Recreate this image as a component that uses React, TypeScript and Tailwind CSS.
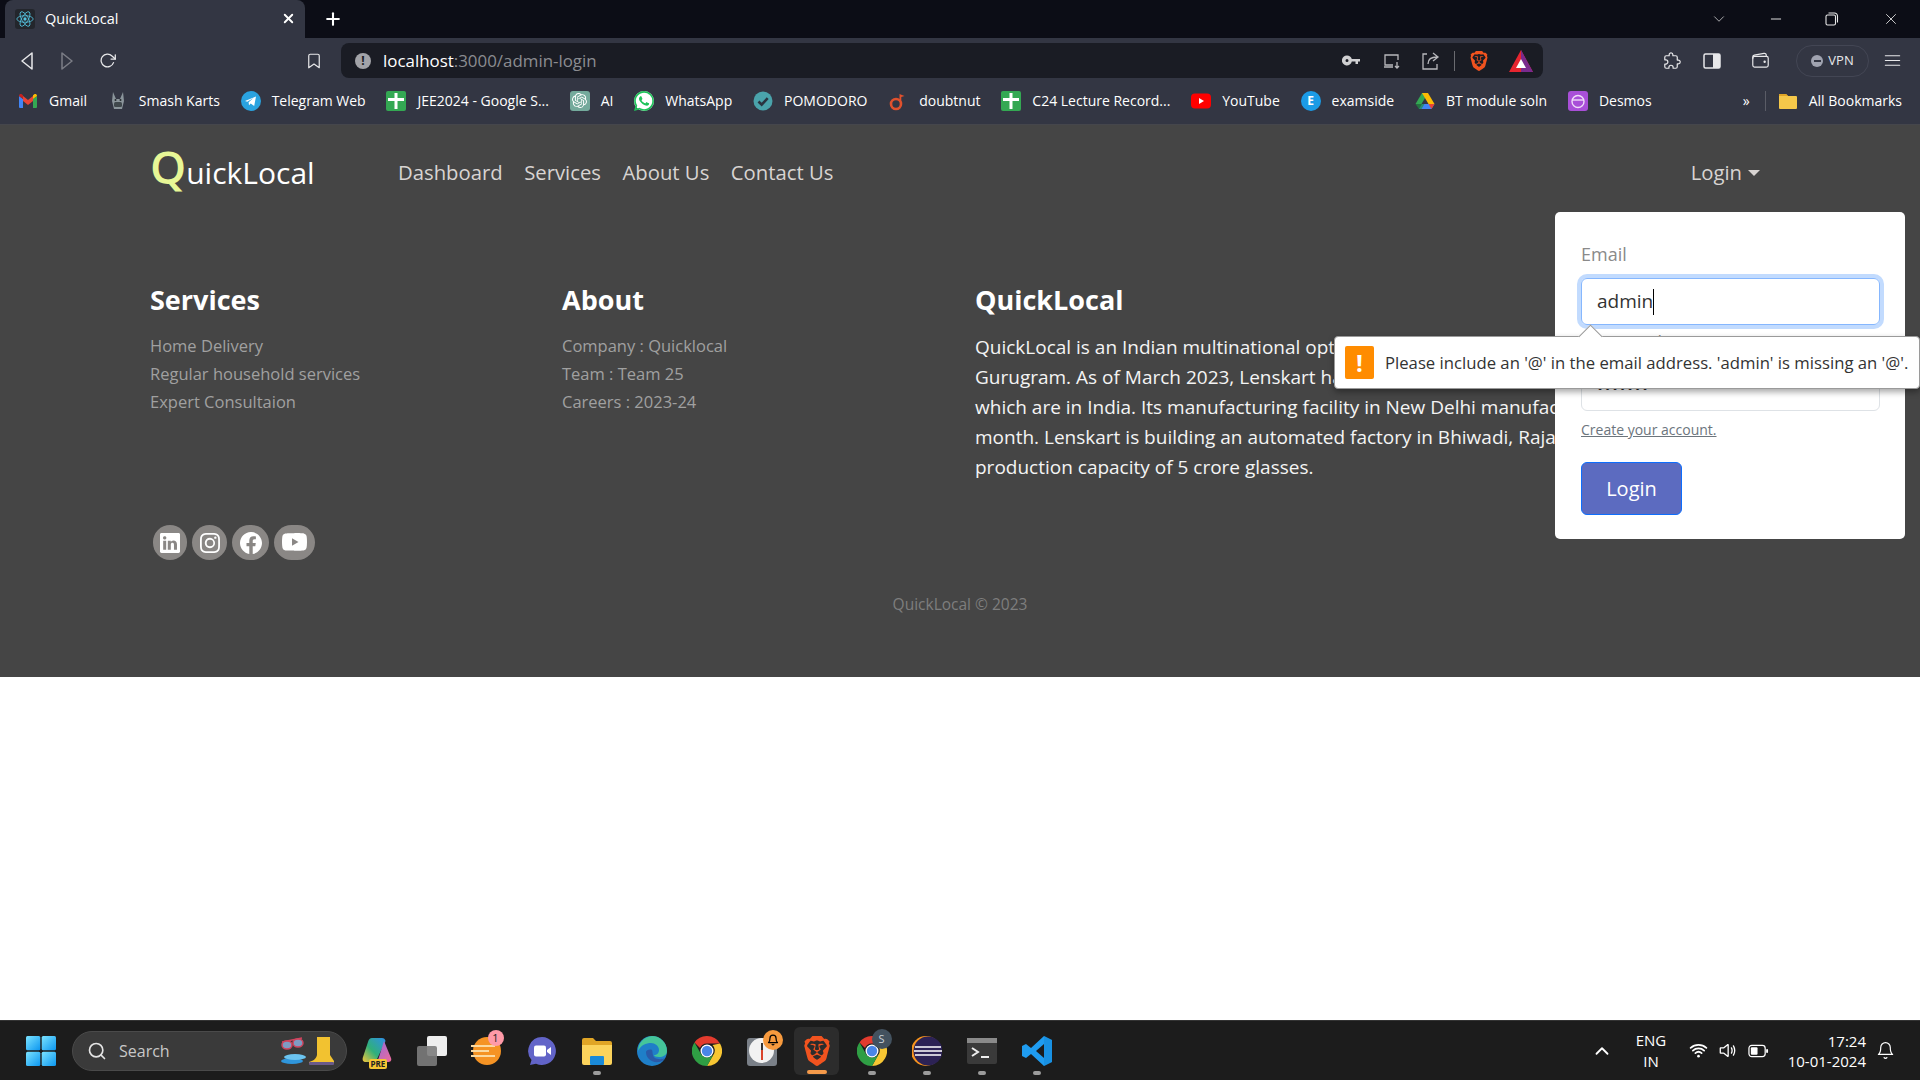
import React from 'react'
import { BsLinkedin, BsInstagram, BsFacebook, BsYoutube } from 'react-icons/bs'
import { SiOpenai, SiWhatsapp, SiBrave } from 'react-icons/si'
import { FiSearch, FiBell, FiChevronUp, FiChevronDown, FiX, FiMinus, FiPlus, FiBookmark, FiRotateCw, FiMenu } from 'react-icons/fi'
import { IoExtensionPuzzleOutline, IoWalletOutline, IoVolumeMediumOutline, IoWifi } from 'react-icons/io5'

const Sheet = () => (
  <svg viewBox="0 0 20 20" className="w-5 h-5">
    <rect width="20" height="20" rx="2" fill="#34a853" />
    <path d="M8.5 2h3v5H18v3h-6.500v8h-3v-8H2V7h6.500z" fill="#fff" />
  </svg>
)

const bookmarks: { label: string; icon: React.ReactNode }[] = [
  {
    label: 'Gmail',
    icon: (
      <svg viewBox="0 0 20 20" className="w-5 h-5">
        <path d="M1 5l4 3v9H2a1 1 0 0 1-1-1z" fill="#4285f4" />
        <path d="M19 5l-4 3v9h3a1 1 0 0 0 1-1z" fill="#34a853" />
        <path d="M5 5v5l5 4 5-4V5l-5 4z" fill="#ea4335" />
        <path d="M1 5c0-2 2-2.500 3-1.500L5 4.300V8L1 5z" fill="#c5221f" />
        <path d="M19 5c0-2-2-2.500-3-1.500l-1 .8V8z" fill="#fbbc04" />
      </svg>
    ),
  },
  {
    label: 'Smash Karts',
    icon: (
      <svg viewBox="0 0 20 20" className="w-5 h-5">
        <path d="M5 1l3 7h4l3-7 1 9-2 8H6l-2-8z" fill="#8b959b" />
        <rect x="6" y="11" width="8" height="5" rx="1.500" fill="#40484c" />
        <circle cx="7.500" cy="9" r="1" fill="#23292c" />
        <circle cx="12.500" cy="9" r="1" fill="#23292c" />
      </svg>
    ),
  },
  {
    label: 'Telegram Web',
    icon: (
      <svg viewBox="0 0 20 20" className="w-5 h-5">
        <circle cx="10" cy="10" r="10" fill="#2aa3e0" />
        <path d="M4 10l11-4.500-1.800 9.500-3.500-2.500-1.700 1.700-.4-3 4.900-4.300-6.200 3.800z" fill="#fff" />
      </svg>
    ),
  },
  { label: 'JEE2024 - Google S...', icon: <Sheet /> },
  {
    label: 'AI',
    icon: (
      <span className="w-5 h-5 rounded-[3px] bg-[#74aa9c] flex items-center justify-center text-white text-[15px]">
        <SiOpenai />
      </span>
    ),
  },
  {
    label: 'WhatsApp',
    icon: (
      <span className="w-5 h-5 rounded-full bg-white flex items-center justify-center text-[#1fc35a] text-[20px]">
        <SiWhatsapp />
      </span>
    ),
  },
  {
    label: 'POMODORO',
    icon: (
      <svg viewBox="0 0 20 20" className="w-5 h-5">
        <circle cx="10" cy="10" r="9.500" fill="#4aa3ab" />
        <path d="M5.500 10.500l3.200 3.200 6-6.500" fill="none" stroke="#2a3440" strokeWidth="2.600" />
      </svg>
    ),
  },
  {
    label: 'doubtnut',
    icon: (
      <svg viewBox="0 0 20 20" className="w-5 h-5">
        <circle cx="8" cy="13" r="5" fill="none" stroke="#e0512d" strokeWidth="2.600" />
        <path d="M11.500 11V3l5 2-3.200 1v6z" fill="#e0512d" />
      </svg>
    ),
  },
  { label: 'C24 Lecture Record...', icon: <Sheet /> },
  {
    label: 'YouTube',
    icon: (
      <svg viewBox="0 0 20 20" className="w-5 h-5">
        <rect y="2.500" width="20" height="15" rx="4" fill="#f00" />
        <path d="M8 7l5 3-5 3z" fill="#fff" />
      </svg>
    ),
  },
  {
    label: 'examside',
    icon: (
      <span className="w-5 h-5 rounded-full bg-[#1b9be6] flex items-center justify-center text-white text-[12px] font-bold">
        E
      </span>
    ),
  },
  {
    label: 'BT module soln',
    icon: (
      <svg viewBox="0 0 20 20" className="w-5 h-5">
        <path d="M7 2h6l-6.500 11H0.500z" fill="#34a853" />
        <path d="M7 2h6l6.500 11h-6z" fill="#fbbc04" />
        <path d="M4 18l3-5h12.500l-3 5z" fill="#4285f4" />
        <path d="M0.500 13h6l3 0-3 5H4z" fill="#1e8e3e" opacity="0.700" />
        <path d="M13.500 13h6l-3 5z" fill="#ea4335" />
      </svg>
    ),
  },
  {
    label: 'Desmos',
    icon: (
      <svg viewBox="0 0 20 20" className="w-5 h-5">
        <rect width="20" height="20" rx="3" fill="#a94fd8" />
        <circle cx="10" cy="10.500" r="6" fill="none" stroke="#f0dcf8" strokeWidth="1.400" />
        <path d="M4 9h12" stroke="#f0dcf8" strokeWidth="1.400" />
      </svg>
    ),
  },
]

const Caret = ({ back = false }: { back?: boolean }) => (
  <svg viewBox="0 0 14 20" className={back ? 'w-[14px] h-5 rotate-180' : 'w-[14px] h-5 opacity-40'}>
    <path d="M2 2l10 8-10 8z" fill="none" stroke="#e8e8ea" strokeWidth="1.500" strokeLinejoin="round" />
  </svg>
)

function TabStrip() {
  return (
    <div className="h-[38px] bg-[#0c0d16] flex items-end pl-[5px] text-white shrink-0">
      <div className="w-[300px] h-[38px] bg-[#333643] rounded-t-[8px] flex items-center pl-[10px] pr-[9px] pb-[1px]">
        <span className="w-5 h-5 bg-[#23262c] rounded-[3px] flex items-center justify-center">
          <svg viewBox="-11 -11 22 22" className="w-[18px] h-[18px]" fill="none" stroke="#53c1de" strokeWidth="1">
            <circle r="2" fill="#53c1de" stroke="none" />
            <ellipse rx="10" ry="4" />
            <ellipse rx="10" ry="4" transform="rotate(60)" />
            <ellipse rx="10" ry="4" transform="rotate(120)" />
          </svg>
        </span>
        <span className="ml-[10px] text-[14.500px] flex-1">QuickLocal</span>
        <FiX className="text-[15px]" strokeWidth={3} />
      </div>
      <div className="h-[38px] flex items-center ml-[18px]">
        <FiPlus className="text-[20px]" strokeWidth={2.500} />
      </div>
      <div className="flex-1" />
      <div className="h-[38px] flex items-center text-[#dcdcdc]">
        <FiChevronDown className="text-[18px] w-[18px] font-light" strokeWidth={1} />
        <span className="w-[40px]" />
        <FiMinus className="text-[16px]" strokeWidth={1.500} />
        <span className="w-[41px]" />
        <svg viewBox="0 0 14 14" className="w-[14px] h-[14px]" fill="none" stroke="#e8e8e8" strokeWidth="1.100">
          <rect x="1" y="3" width="9.500" height="10" rx="1.500" />
          <path d="M3.500 1h6a3 3 0 0 1 3 3v6.500" />
        </svg>
        <span className="w-[43px]" />
        <FiX className="text-[18px]" strokeWidth={1.200} />
        <span className="w-[20px]" />
      </div>
    </div>
  )
}

function Toolbar() {
  return (
    <div className="h-[40px] bg-[#333643] flex items-end pl-[20px] pr-[18px] text-[#e8e8ea] shrink-0">
      <div className="h-[35px] flex items-center w-[321px] shrink-0">
        <Caret back />
        <span className="w-[26px]" />
        <Caret />
        <span className="w-[25px]" />
        <FiRotateCw className="text-[17px]" strokeWidth={1.800} />
        <span className="w-[189px]" />
        <FiBookmark className="text-[18px]" strokeWidth={1.600} />
      </div>
      <div className="w-[1202px] h-[35px] bg-[#1a1c24] rounded-t-[8px] rounded-b-[8px] flex items-center pl-[14px] pr-[10px]">
        <span className="w-4 h-4 rounded-full bg-[#a2a3a8] text-[#1a1c24] flex items-center justify-center text-[12px] font-bold">!</span>
        <span className="ml-[12px] text-[16.900px] flex-1">
          <span className="text-white">localhost</span>
          <span className="text-[#8b8c91]">:3000/admin-login</span>
        </span>
        <svg viewBox="0 0 18 12" className="w-[18px] h-[12px]">
          <path d="M5 0.500a5 5 0 0 1 4.800 3.500H18v2.500h-2v2.500h-2.500V6.500H9.800A5 5 0 1 1 5 0.500zm0 3.500a1.500 1.500 0 1 0 0 3 1.500 1.500 0 0 0 0-3z" fill="#d0d0d2" fillRule="evenodd" />
        </svg>
        <span className="w-[23px]" />
        <svg viewBox="0 0 18 18" className="w-[18px] h-[18px]" fill="none" stroke="#b8b8bc" strokeWidth="1.300">
          <path d="M15 8V3H2v10h8M1 15h9M14 10v6m-2-2l2 2 2-2" />
        </svg>
        <span className="w-[21px]" />
        <svg viewBox="0 0 18 18" className="w-[18px] h-[18px]" fill="none" stroke="#b8b8bc" strokeWidth="1.300">
          <path d="M5 2H1v15h14v-5M6 12c0-5 3-7 9-7M11 1l5 4-5 4" />
        </svg>
        <span className="w-[14px]" />
        <span className="w-px h-5 bg-[#6a6b70]" />
        <span className="w-[14px]" />
        <SiBrave className="text-[20px] text-[#f1531f]" />
        <span className="w-[20px]" />
        <svg viewBox="0 0 24 22" className="w-[24px] h-[22px]">
          <path d="M12 0l12 22H0z" fill="#e6252f" />
          <path d="M12 0l12 22H12z" fill="#7a2a8e" />
          <path d="M12 9l5 9H7z" fill="#fff" />
        </svg>
      </div>
      <div className="flex-1 h-[35px] flex items-center justify-end">
        <IoExtensionPuzzleOutline className="text-[19px]" />
        <span className="w-[21px]" />
        <svg viewBox="0 0 18 16" className="w-[18px] h-[16px]">
          <rect x="1" y="1" width="16" height="14" rx="1.500" fill="none" stroke="#e8e8ea" strokeWidth="1.500" />
          <rect x="10" y="1" width="7" height="14" fill="#e8e8ea" />
        </svg>
        <span className="w-[30px]" />
        <IoWalletOutline className="text-[19px]" />
        <span className="w-[26px]" />
        <span className="w-[73px] h-[32px] border border-[#434654] rounded-full flex items-center justify-center gap-[5px] text-[13px]">
          <span className="w-3 h-3 rounded-full bg-[#a0a3b0] flex items-center justify-center">
            <span className="w-[7px] h-[2px] bg-[#333643]" />
          </span>
          VPN
        </span>
        <span className="w-[14px]" />
        <FiMenu className="text-[19px]" strokeWidth={1.500} />
      </div>
    </div>
  )
}

function BookmarksBar() {
  return (
    <div className="h-[47px] bg-[#333643] border-b border-[#45464c] flex items-center pl-[18px] pr-[18px] pb-[1px] text-[14px] text-white shrink-0">
      <div className="flex items-center gap-[20.800px] flex-1">
        {bookmarks.map((b) => (
          <div key={b.label} className="flex items-center gap-[11px] whitespace-nowrap">
            <span className="w-5 h-5 flex items-center justify-center">{b.icon}</span>
            <span>{b.label}</span>
          </div>
        ))}
      </div>
      <span className="mr-[15px] text-[14px]">»</span>
      <span className="w-px h-5 bg-[#5a5c66] mr-[12px]" />
      <svg viewBox="0 0 20 20" className="w-5 h-5 mr-[11px]">
        <path d="M1 4a1 1 0 0 1 1-1h6l2 2h8a1 1 0 0 1 1 1v11a1 1 0 0 1-1 1H2a1 1 0 0 1-1-1z" fill="#f5c84a" />
        <path d="M1 4a1 1 0 0 1 1-1h6l2 2H1z" fill="#e0a526" />
      </svg>
      <span className="whitespace-nowrap">All Bookmarks</span>
    </div>
  )
}

function LoginMenu() {
  return (
    <div className="absolute left-[1555px] top-[87px] w-[350px] h-[327px] bg-white rounded-[5px] pt-[25px] px-[26px] z-10">
      <p className="text-[18px] leading-[34px] text-[#8a8a8a]">Email</p>
      <div className="mt-[7px] h-[47px] w-[299px] rounded-[6px] border border-[#86b7fe] ring-4 ring-[#c2dbfe] flex items-center pl-[15px] text-[19px] text-[#333]">
        admin<span className="w-px h-[26px] bg-black" />
      </div>
      <p className="mt-[3px] text-[18px] leading-[28px] text-[#8a8a8a]">Password</p>
      <div className="mt-[8px] h-[47px] w-[299px] rounded-[6px] border border-[#dee2e6] pl-[15px] flex items-center text-[16px] text-[#222] tracking-[1.500px]">
        •••••••
      </div>
      <a className="block mt-[7px] text-[14px] leading-[24px] text-[#6c757d] underline">Create your account.</a>
      <button className="mt-[20px] w-[101px] h-[53px] rounded-[6px] bg-[#5c6bc0] border border-[#0d6efd] text-white text-[20px]">
        Login
      </button>
    </div>
  )
}

function ValidationBubble() {
  return (
    <div className="absolute left-[1334px] top-[211px] w-[586px] h-[53px] bg-white border border-[#9a9a9a] rounded-[4px] shadow-[0_3px_6px_rgba(0,0,0,0.35)] flex items-center pl-[10px] z-20 whitespace-nowrap">
      <span className="absolute left-[247px] -top-[9px] w-[17px] h-[17px] bg-white border-l border-t border-[#9a9a9a] rotate-45" />
      <span className="w-[29px] h-[33px] rounded-[2px] bg-[#ff8c00] text-white flex items-center justify-center text-[24px] font-bold shrink-0">!</span>
      <span className="ml-[11px] text-[16.700px] text-[#333]">Please include an '@' in the email address. 'admin' is missing an '@'.</span>
    </div>
  )
}

function Page() {
  const social = [
    { icon: <BsLinkedin className="text-[20px]" />, cls: 'w-[34px]' },
    { icon: <BsInstagram className="text-[20px]" />, cls: 'w-[35px]' },
    { icon: <BsFacebook className="text-[22px]" />, cls: 'w-[37px]' },
    { icon: <BsYoutube className="text-[25px]" />, cls: 'w-[41px]' },
  ]
  return (
    <div className="relative h-[552px] bg-[#454545] shrink-0 overflow-hidden">
      <nav className="h-[95px] pl-[150px] pr-[160px] flex items-center">
        <div className="w-[248px] mb-[14px] text-white text-[30px] leading-none font-medium whitespace-nowrap">
          <span className="text-[#e8f796] text-[46px] leading-none font-semibold">Q</span>uickLocal
        </div>
        <div className="flex items-center gap-[21.500px] text-[20.300px] text-[#d8d4d2] flex-1">
          <span>Dashboard</span>
          <span>Services</span>
          <span>About Us</span>
          <span>Contact Us</span>
        </div>
        <div className="flex items-center gap-[6px] text-[20.300px] text-[#d8d4d2]">
          Login
          <span className="w-0 h-0 border-x-[6px] border-x-transparent border-t-[6px] border-t-[#d8d4d2]" />
        </div>
      </nav>
      <div className="pl-[150px] pt-[61px] grid grid-cols-[412px_413px_1fr]">
        <div>
          <h3 className="text-[27px] leading-[38px] font-bold text-white">Services</h3>
          <ul className="mt-[13px] text-[16.500px] leading-[28px] text-[#a0a0a0]">
            <li>Home Delivery</li>
            <li>Regular household services</li>
            <li>Expert Consultaion</li>
          </ul>
        </div>
        <div>
          <h3 className="text-[27px] leading-[38px] font-bold text-white">About</h3>
          <ul className="mt-[13px] text-[16.500px] leading-[28px] text-[#a0a0a0]">
            <li>Company : Quicklocal</li>
            <li>Team : Team 25</li>
            <li>Careers : 2023-24</li>
          </ul>
        </div>
        <div>
          <h3 className="text-[27px] leading-[38px] font-bold text-white">QuickLocal</h3>
          <div className="mt-[13px] text-[19px] leading-[30px] text-[#f4f4f4] whitespace-nowrap">
            <p>QuickLocal is an Indian multinational optical prescription eyewear retail</p>
            <p>Gurugram. As of March 2023, Lenskart has 2,000 stores, of</p>
            <p>which are in India. Its manufacturing facility in New Delhi manufactures 3 lakh glasses per</p>
            <p>month. Lenskart is building an automated factory in Bhiwadi, Rajasthan with a</p>
            <p>production capacity of 5 crore glasses.</p>
          </div>
        </div>
      </div>
      <div className="pl-[153px] mt-[43px] flex gap-[5px]">
        {social.map((s, i) => (
          <span key={i} className={`${s.cls} h-[35px] rounded-full bg-[#8a8785] text-white flex items-center justify-center`}>
            {s.icon}
          </span>
        ))}
      </div>
      <p className="mt-[34px] text-center text-[15.500px] leading-[20px] text-[#7e7e7e]">QuickLocal © 2023</p>
      <LoginMenu />
      <ValidationBubble />
    </div>
  )
}

function TaskIcon({ children, dot, active }: { children: React.ReactNode; dot?: boolean; active?: boolean }) {
  return (
    <div className={active ? 'relative w-[45px] h-[48px] mx-[5px] rounded-[6px] bg-[#2c2c2c] flex items-center justify-center' : 'relative w-[55px] h-[48px] flex items-center justify-center'}>
      {children}
      {dot && <span className="absolute bottom-0 w-[8px] h-[4px] rounded-full bg-[#9b9b9b]" />}
      {active && <span className="absolute bottom-[1px] w-[20px] h-[4px] rounded-full bg-[#f59a4a]" />}
    </div>
  )
}

const ChromeLogo = () => (
  <svg viewBox="0 0 30 30" className="w-[30px] h-[30px]">
    <path d="M15 0a15 15 0 0 1 13 7.500H15a7.500 7.500 0 0 0-7 4.500L2.500 6.500A15 15 0 0 1 15 0z" fill="#e33b2e" />
    <path d="M28 7.500A15 15 0 0 1 15 30l6.500-11.500A7.500 7.500 0 0 0 20.500 9z" fill="#f7c633" />
    <path d="M15 30A15 15 0 0 1 2.500 6.500L9 18a7.500 7.500 0 0 0 12.500.500z" fill="#2f9e44" />
    <circle cx="15" cy="15" r="6.500" fill="#fff" />
    <circle cx="15" cy="15" r="5.200" fill="#4a86e8" />
  </svg>
)

function Taskbar() {
  return (
    <div className="h-[60px] bg-[#1c1c1c] border-t border-[#333] flex items-center pl-[26px] text-white flex-1">
      <svg viewBox="0 0 30 30" className="w-[30px] h-[30px] shrink-0">
        <defs>
          <linearGradient id="win" x1="0" y1="0" x2="1" y2="1">
            <stop offset="0" stopColor="#7be3ff" />
            <stop offset="1" stopColor="#0b96f0" />
          </linearGradient>
        </defs>
        <rect width="14.300" height="14.300" rx="1.500" fill="url(#win)" />
        <rect x="15.700" width="14.300" height="14.300" rx="1.500" fill="url(#win)" />
        <rect y="15.700" width="14.300" height="14.300" rx="1.500" fill="url(#win)" />
        <rect x="15.700" y="15.700" width="14.300" height="14.300" rx="1.500" fill="url(#win)" />
      </svg>
      <div className="ml-[16px] w-[275px] h-[40px] rounded-full bg-[#3a3a3a] border border-[#4a4a4a] flex items-center pl-[14px] pr-[10px] shrink-0">
        <FiSearch className="text-[20px] text-[#e4e4e4]" />
        <span className="ml-[12px] text-[16px] text-[#c8c8c8] flex-1">Search</span>
        <svg viewBox="0 0 56 32" className="w-[56px] h-[32px]">
          <path d="M2 7l20-4" stroke="#d0455f" strokeWidth="1.500" />
          <ellipse cx="7" cy="10" rx="5" ry="4" fill="#7f9cc4" stroke="#d0455f" strokeWidth="1.500" />
          <ellipse cx="18" cy="8" rx="5" ry="4" fill="#7f9cc4" stroke="#d0455f" strokeWidth="1.500" />
          <ellipse cx="12" cy="26" rx="11" ry="3" fill="#2f96dc" />
          <ellipse cx="15" cy="22" rx="11" ry="3" fill="#6cc4f0" />
          <path d="M37 2h13v18l4 6v3H29v-2c4-1 7-3 8-7z" fill="#f2c230" />
          <rect x="29" y="27" width="25" height="3" rx="1" fill="#6a5a8a" />
        </svg>
      </div>
      <div className="flex items-center ml-[2px] shrink-0">
        <TaskIcon>
          <div className="relative">
            <svg viewBox="0 0 30 28" className="w-[30px] h-[28px]">
              <defs>
                <linearGradient id="copl" x1="0" y1="1" x2="1" y2="0">
                  <stop offset="0" stopColor="#f5c53a" />
                  <stop offset="0.450" stopColor="#30b07a" />
                  <stop offset="1" stopColor="#2f8fe8" />
                </linearGradient>
                <linearGradient id="copr" x1="0" y1="0" x2="1" y2="1">
                  <stop offset="0" stopColor="#8a6be0" />
                  <stop offset="1" stopColor="#f06a9a" />
                </linearGradient>
              </defs>
              <path d="M10 1h10c2 0 3 1 3.500 3L16 20c-1 3-3 5-6 5H4c-3 0-4-2-3-5L6 5c.7-2.500 2-4 4-4z" fill="url(#copl)" />
              <path d="M22 4l7 17c1 3-1 4-3 4H12c3-1 4-2 5-5z" fill="url(#copr)" />
            </svg>
            <span className="absolute -bottom-[4px] left-[7px] px-[2px] h-[10px] rounded-[2px] bg-[#f7c633] text-[#222] text-[8px] leading-[10px] font-bold">PRE</span>
          </div>
        </TaskIcon>
        <TaskIcon>
          <div className="relative w-[30px] h-[30px]">
            <span className="absolute right-0 top-0 w-[20px] h-[20px] rounded-[2px] bg-[#eeeeee]" />
            <span className="absolute left-0 bottom-0 w-[20px] h-[20px] rounded-[2px] bg-[#7c7c7c]/90" />
          </div>
        </TaskIcon>
        <TaskIcon>
          <div className="relative w-[28px] h-[28px] rounded-full bg-[#f59324] flex flex-col items-start justify-center gap-[3px]">
            <span className="-ml-[2px] w-[24px] h-[2px] bg-[#fbd9a0]" />
            <span className="-ml-[2px] w-[18px] h-[2px] bg-[#fbd9a0]" />
            <span className="-ml-[2px] w-[24px] h-[2px] bg-[#fbd9a0]" />
            <span className="absolute -top-[7px] left-[15px] w-[16px] h-[16px] rounded-full bg-[#ff9aa8] text-[#222] text-[11px] leading-[16px] text-center">1</span>
          </div>
        </TaskIcon>
        <TaskIcon>
          <svg viewBox="0 0 30 30" className="w-[30px] h-[30px]">
            <path d="M15 1a14 14 0 1 1-6 26.700L3 29l1.500-5A14 14 0 0 1 15 1z" fill="#6264c8" />
            <rect x="7" y="9.500" width="12" height="11" rx="2" fill="#fff" />
            <path d="M20 14l4-3v8l-4-3z" fill="#fff" />
          </svg>
        </TaskIcon>
        <TaskIcon dot>
          <svg viewBox="0 0 30 28" className="w-[30px] h-[28px]">
            <path d="M0 3a2 2 0 0 1 2-2h9l3 3h14a2 2 0 0 1 2 2v3H0z" fill="#e0a526" />
            <path d="M0 8h30v18a2 2 0 0 1-2 2H2a2 2 0 0 1-2-2z" fill="#fbd35c" />
            <rect x="8" y="19" width="14" height="9" rx="1" fill="#1a8ad8" />
          </svg>
        </TaskIcon>
        <TaskIcon>
          <svg viewBox="0 0 30 30" className="w-[30px] h-[30px]">
            <circle cx="15" cy="15" r="15" fill="#1f7fc8" />
            <path d="M15 0a15 15 0 0 1 15 15c0 4-4 6-8 6-3 0-5-1-5-2 3 0 5-2 5-5 0-4-4-7-8-7-5 0-10 2-13 8A15 15 0 0 1 15 0z" fill="#45c59a" />
            <path d="M9 16c0 6 5 11 13 10 3-.5 5-2 6-4-4 2-8 1-10 0-3-2-2-6-3-8-2-1-6 0-6 2z" fill="#2a5aa8" />
          </svg>
        </TaskIcon>
        <TaskIcon>
          <ChromeLogo />
        </TaskIcon>
        <TaskIcon>
          <div className="relative w-[30px] h-[30px]">
            <span className="absolute inset-0 top-[2px] rounded-[3px] bg-[#7a8088]" />
            <span className="absolute left-[2px] top-[2px] w-[25px] h-[25px] rounded-full bg-[#f2f2f2]" />
            <span className="absolute left-[14px] top-[7px] w-[2px] h-[9px] bg-[#333]" />
            <span className="absolute left-[14px] top-[14px] w-[2px] h-[10px] bg-[#d9432a]" />
            <span className="absolute left-[16px] -top-[6px] w-[20px] h-[20px] rounded-full bg-[#f79a3e] flex items-center justify-center text-black text-[12px]">
              <FiBell strokeWidth={2.500} />
            </span>
          </div>
        </TaskIcon>
        <TaskIcon active>
          <SiBrave className="text-[30px] text-[#f1531f]" />
        </TaskIcon>
        <TaskIcon dot>
          <div className="relative">
            <ChromeLogo />
            <span className="absolute -top-[7px] left-[15px] w-[20px] h-[20px] rounded-full bg-[#43525f] text-[#c9d2d9] text-[11px] leading-[20px] text-center">S</span>
          </div>
        </TaskIcon>
        <TaskIcon dot>
          <svg viewBox="0 0 30 30" className="w-[30px] h-[30px]">
            <circle cx="14" cy="15" r="15" fill="#f7941e" />
            <circle cx="16" cy="15" r="14.500" fill="#2c2255" />
            <path d="M3 11h26M2 15h28M3 19h26" stroke="#fff" strokeWidth="1.500" />
          </svg>
        </TaskIcon>
        <TaskIcon dot>
          <svg viewBox="0 0 30 26" className="w-[30px] h-[26px]">
            <rect width="30" height="26" rx="2" fill="#3a3a3a" />
            <rect width="30" height="5" fill="#8a8a8a" />
            <path d="M5 10l6 4-6 4" fill="none" stroke="#eee" strokeWidth="2" />
            <path d="M14 19h8" stroke="#eee" strokeWidth="2" />
          </svg>
        </TaskIcon>
        <TaskIcon dot>
          <svg viewBox="0 0 30 30" className="w-[30px] h-[30px]">
            <path d="M22 0l8 4v22l-8 4L9 18l-5 4-4-2v-10l4-2 5 4z" fill="#1f9cf0" />
            <path d="M22 8l-8 7 8 7z" fill="#1c1c1c" />
            <path d="M22 0l8 4v22l-8 4z" fill="#0a78c8" opacity="0.300" />
          </svg>
        </TaskIcon>
      </div>
      <div className="flex-1" />
      <div className="flex items-center shrink-0 pr-[25px]">
        <FiChevronUp className="text-[22px]" />
        <div className="ml-[21px] w-[34px] text-center text-[15px] leading-[21px] whitespace-nowrap flex flex-col items-center">
          <span>ENG</span>
          <span>IN</span>
        </div>
        <IoWifi className="ml-[20px] text-[21px]" />
        <IoVolumeMediumOutline className="ml-[8px] text-[21px]" />
        <svg viewBox="0 0 22 14" className="ml-[10px] w-[21px] h-[14px]">
          <rect x="1" y="1" width="17" height="12" rx="3" fill="none" stroke="#fff" strokeWidth="1.300" />
          <rect x="3" y="3" width="7" height="8" rx="1" fill="#fff" />
          <rect x="19" y="5" width="2" height="4" rx="1" fill="#fff" />
        </svg>
        <div className="ml-[17px] w-[80px] text-right text-[15px] leading-[20px] whitespace-nowrap">
          <div>17:24</div>
          <div>10-01-2024</div>
        </div>
        <FiBell className="ml-[10px] text-[19px]" strokeWidth={1.500} />
      </div>
    </div>
  )
}

export default function App() {
  return (
    <div className="w-[1920px] h-[1080px] flex flex-col bg-white overflow-hidden font-['Open_Sans',sans-serif]">
      <TabStrip />
      <Toolbar />
      <BookmarksBar />
      <Page />
      <div className="h-[343px] bg-white shrink-0" />
      <Taskbar />
    </div>
  )
}
